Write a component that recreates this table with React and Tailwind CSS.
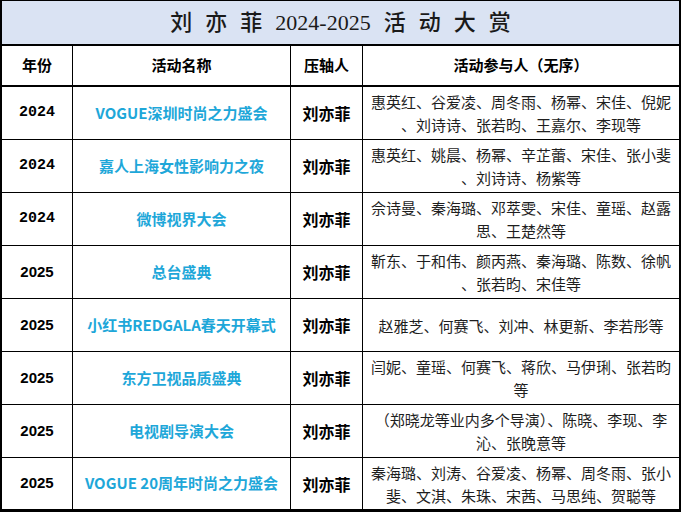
const rows = [
  { year: "2024", name: "VOGUE深圳时尚之力盛会", lines: ["惠英红、谷爱凌、周冬雨、杨幂、宋佳、倪妮", "、刘诗诗、张若昀、王嘉尔、李现等"] },
  { year: "2024", name: "嘉人上海女性影响力之夜", lines: ["惠英红、姚晨、杨幂、辛芷蕾、宋佳、张小斐", "、刘诗诗、杨紫等"] },
  { year: "2024", name: "微博视界大会", lines: ["佘诗曼、秦海璐、邓萃雯、宋佳、童瑶、赵露", "思、王楚然等"] },
  { year: "2025", name: "总台盛典", lines: ["靳东、于和伟、颜丙燕、秦海璐、陈数、徐帆", "、张若昀、宋佳等"] },
  { year: "2025", name: "小红书REDGALA春天开幕式", lines: ["赵雅芝、何赛飞、刘冲、林更新、李若彤等"] },
  { year: "2025", name: "东方卫视品质盛典", lines: ["闫妮、童瑶、何赛飞、蒋欣、马伊琍、张若昀", "等"] },
  { year: "2025", name: "电视剧导演大会", lines: ["（郑晓龙等业内多个导演）、陈晓、李现、李", "沁、张晚意等"] },
  { year: "2025", name: "VOGUE 20周年时尚之力盛会", lines: ["秦海璐、刘涛、谷爱凌、杨幂、周冬雨、张小", "斐、文淇、朱珠、宋茜、马思纯、贺聪等"] },
];

const cjk = { fontFamily: '"Noto Sans CJK SC", "Noto Sans", sans-serif' };
const serifYear = { fontFamily: '"Liberation Mono", "Noto Sans CJK SC", monospace' };
const sansYear = { fontFamily: '"Liberation Sans", "Noto Sans CJK SC", sans-serif' };
const titleFont = { fontFamily: '"Liberation Serif", "Noto Sans CJK SC", serif' };

function Row({ row, last }) {
  return (
    <div
      className={`grid grid-cols-[71px_218px_72px_316px] ${last ? "h-[51px]" : "h-[53px] border-b border-black"}`}
    >
      <div
        className="flex items-center justify-center border-r border-black text-[15px] font-bold text-black"
        style={row.year === "2024" ? serifYear : sansYear}
      >
        {row.year}
      </div>
      <div
        className="flex items-center justify-center border-r border-black text-[15px] font-bold text-[#1ea7d9]"
        style={cjk}
      >
        {row.name}
      </div>
      <div
        className="flex items-center justify-center border-r border-black text-[16px] font-bold text-black"
        style={cjk}
      >
        刘亦菲
      </div>
      <div
        className="flex flex-col items-center justify-center text-[15px] leading-[23px] text-[#1e1e1e]"
        style={cjk}
      >
        {row.lines.map((l, i) => (
          <span key={i} className="whitespace-nowrap">{l}</span>
        ))}
      </div>
    </div>
  );
}

export default function App() {
  const title = ["刘", "亦", "菲", "2024-2025", "活", "动", "大", "赏"];
  return (
    <div className="h-[512px] w-[683px] bg-white">
      <div className="w-[681px] border-t border-l-2 border-r-2 border-b-[3px] border-black">
        <div
          className="flex h-[45px] items-center justify-center gap-[13px] border-b-2 border-black bg-[#dae3f3] text-[22px] font-medium text-[#1a1a1a]"
          style={titleFont}
        >
          {title.map((t, i) => (
            <span key={i}>{t}</span>
          ))}
        </div>
        <div
          className="grid h-[41px] grid-cols-[71px_218px_72px_316px] border-b-2 border-black text-[15px] font-bold text-black"
          style={cjk}
        >
          <div className="flex items-center justify-center border-r border-black">年份</div>
          <div className="flex items-center justify-center border-r border-black">活动名称</div>
          <div className="flex items-center justify-center border-r border-black">压轴人</div>
          <div className="flex items-center justify-center">活动参与人（无序）</div>
        </div>
        {rows.map((r, i) => (
          <Row key={i} row={r} last={i === rows.length - 1} />
        ))}
      </div>
    </div>
  );
}
